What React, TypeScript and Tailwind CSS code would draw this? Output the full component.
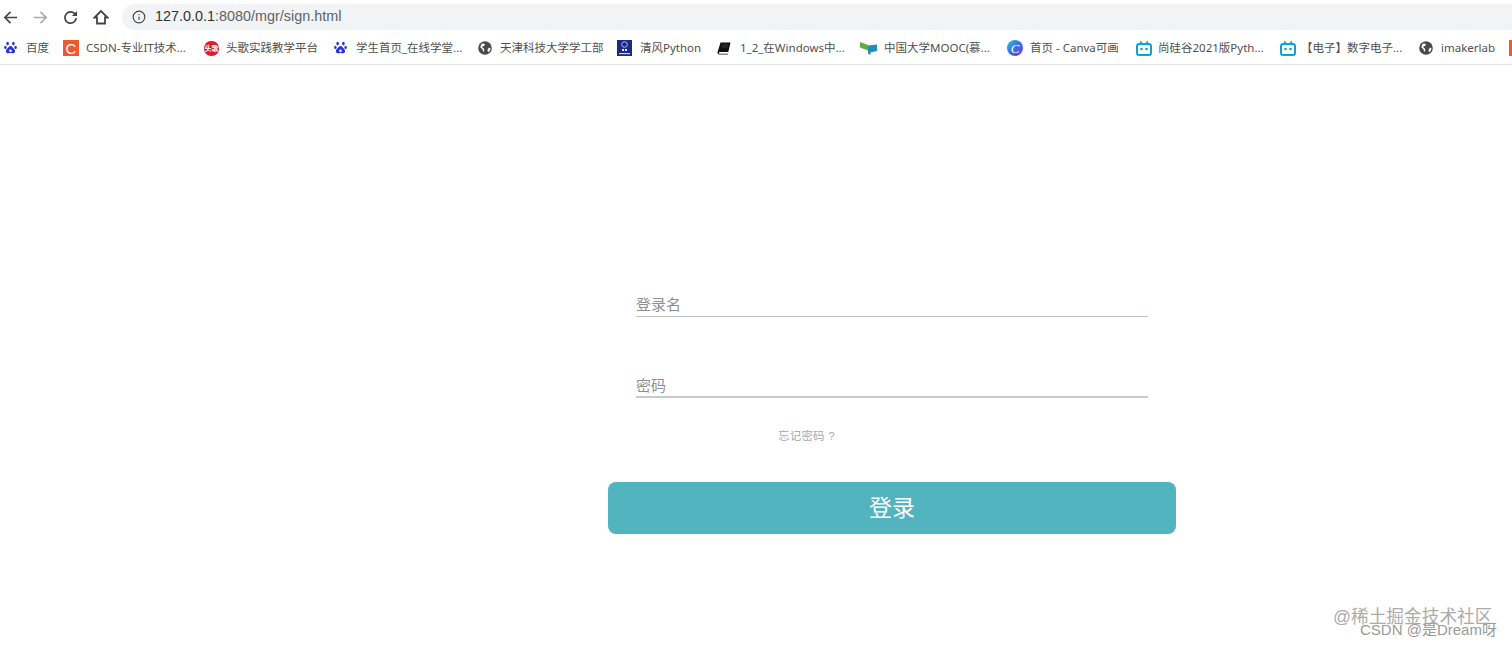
import React from 'react';
import { Info } from 'lucide-react';

const cjk = "font-['Liberation_Sans','Noto_Sans_CJK_SC',sans-serif]";
const barFont = "font-['Noto_Sans','Noto_Sans_CJK_SC',sans-serif]";

const NavIcon = ({ d, color, width = 15 }: { d: string; color: string; width?: number }) => (
  <svg width={width} height={width} viewBox="0 0 16 16" fill="none" stroke={color} strokeWidth="1.800" strokeLinejoin="miter">
    <path d={d} />
  </svg>
);

const Reload = () => (
  <svg width="15" height="15" viewBox="0 0 16 16" fill="none">
    <path d="M13.300 5.200A6 6 0 1 0 14 8.500" stroke="#444" strokeWidth="1.800" />
    <path d="M15 1v5.500h-5.500z" fill="#444" />
  </svg>
);

const Paw = () => (
  <svg width="13" height="14" viewBox="0 0 13 14" fill="#2932e1">
    <ellipse cx="3.600" cy="2.600" rx="1.300" ry="1.800" />
    <ellipse cx="9.400" cy="2.600" rx="1.300" ry="1.800" />
    <ellipse cx="1.400" cy="6.400" rx="1.200" ry="1.700" />
    <ellipse cx="11.600" cy="6.400" rx="1.200" ry="1.700" />
    <path d="M6.500 5c-1.600 0-2.200 1.600-3.200 2.600-1 1-1.600 1.800-1.300 3.200.3 1.300 1.600 1.700 2.700 1.500.7-.1 1.200-.3 1.800-.3s1.100.2 1.800.3c1.100.2 2.400-.2 2.700-1.500.3-1.400-.3-2.200-1.300-3.200-1-1-1.600-2.600-3.200-2.600z" />
    <circle cx="6.500" cy="9.800" r="1.300" fill="#fff" />
  </svg>
);

const Csdn = () => (
  <span className="flex h-4 w-4 items-center justify-center bg-[#f0582f] font-['Liberation_Sans',sans-serif] text-[15px] leading-none text-white">C</span>
);

const Touge = () => (
  <span className={`flex h-[15px] w-[15px] items-center justify-center rounded-[7px] bg-[#d9202a] text-[7px] font-bold leading-none text-white ${cjk}`}>头歌</span>
);

const Globe = () => (
  <svg width="14" height="14" viewBox="0 0 14 14">
    <circle cx="7" cy="7" r="6.800" fill="#4a4a4a" />
    <path d="M4 2.500l2.200.3.800 1-1 1.200-1.300.2-.4 1.300 1.600 1 .4 2.500-1 .8-1-2.800-2-1.500.5-2zM10.800 6.800l1.700.2-.6 2.800-1.700 1.500-.8-2z" fill="#fff" />
  </svg>
);

const PythonBadge = () => (
  <svg width="15" height="16" viewBox="0 0 15 16">
    <rect width="15" height="16" fill="#1c2a85" />
    <circle cx="7.500" cy="4.500" r="2.800" fill="none" stroke="#a8bcf0" strokeWidth="1" />
    <path d="M5 9h2v2H5zM8 9h2v2H8z" fill="#e8edfb" />
    <path d="M2 13h11v1.200H2z" fill="#c5d0f2" />
  </svg>
);

const Book = () => (
  <svg width="14" height="13" viewBox="0 0 14 13">
    <path d="M3.500 0.500h10l-2.200 9.500H3.100c-.8 0-1.200.4-1.200.9s.4.900 1.200.9h8l-.2.700H2.500C1.300 12.500.5 11.900.5 10.800c0-.3 0-.6.100-.9z" fill="#111" />
    <path d="M5 3h6M4.600 5h6" stroke="#666" strokeWidth="0.500" />
  </svg>
);

const Mooc = () => (
  <svg width="17" height="13" viewBox="0 0 17 13">
    <path d="M0 0l8 3v5.500L0 5.500z" fill="#5cae3d" />
    <path d="M8 3.500l9-1v6.500l-6.500 1.500V13L8 11.500z" fill="#1d8fb8" />
  </svg>
);

const Canva = () => (
  <span className="flex h-4 w-4 items-center justify-center rounded-full bg-gradient-to-br from-[#1fc4d9] via-[#3a6fe0] to-[#6a2fd6] font-['Liberation_Serif',serif] text-[13px] italic leading-none text-white">C</span>
);

const Bili = () => (
  <svg width="16" height="15" viewBox="0 0 16 15" fill="none">
    <path d="M4.500 0.800l2 2.200M11.500 0.800l-2 2.200" stroke="#0ea3d4" strokeWidth="1.500" strokeLinecap="round" />
    <rect x="1" y="3" width="14" height="11" rx="2" stroke="#0ea3d4" strokeWidth="2" />
    <circle cx="5.500" cy="8" r="1.300" fill="#0ea3d4" />
    <circle cx="10.500" cy="8" r="1.300" fill="#0ea3d4" />
  </svg>
);

const bookmarks = [
  { icon: <Paw />, label: '百度', box: 'w-[59px]', gap: 'gap-[9px]' },
  { icon: <Csdn />, label: 'CSDN-专业IT技术...', box: 'w-[141px]', gap: 'gap-[7px]' },
  { icon: <Touge />, label: '头歌实践教学平台', box: 'w-[130px]', gap: 'gap-[7px]' },
  { icon: <Paw />, label: '学生首页_在线学堂...', box: 'w-[144px]', gap: 'gap-[9px]' },
  { icon: <Globe />, label: '天津科技大学学工部', box: 'w-[139px]', gap: 'gap-[8px]' },
  { icon: <PythonBadge />, label: '清风Python', box: 'w-[100px]', gap: 'gap-[8px]' },
  { icon: <Book />, label: '1_2_在Windows中...', box: 'w-[143px]', gap: 'gap-[9px]' },
  { icon: <Mooc />, label: '中国大学MOOC(慕...', box: 'w-[147px]', gap: 'gap-[7px]' },
  { icon: <Canva />, label: '首页 - Canva可画', box: 'w-[129px]', gap: 'gap-[7px]' },
  { icon: <Bili />, label: '尚硅谷2021版Pyth...', box: 'w-[144px]', gap: 'gap-[6px]' },
  { icon: <Bili />, label: '【电子】数字电子...', box: 'w-[139px]', gap: 'gap-[5px]' },
  { icon: <Globe />, label: 'imakerlab', box: 'w-[90px]', gap: 'gap-[8px]' },
];

const App: React.FC = () => {
  return (
    <div className={`relative h-[646px] w-[1512px] overflow-hidden bg-white ${cjk}`}>
      {/* browser toolbar */}
      <div className="flex h-[34px] items-center pl-[3px]">
        <div className="flex w-[119px] items-center">
          <NavIcon d="M15 8H2.500M8 2 2 8l6 6" color="#444" />
          <span className="ml-[15px]">
            <NavIcon d="M1 8h12.500M8 2l6 6-6 6" color="#aaa" />
          </span>
          <span className="ml-[15px]">
            <Reload />
          </span>
          <span className="ml-[15px]">
            <NavIcon d="M4 14.500V8.500H1.500L8 2l6.500 6.500H12v6z" color="#444" width={16} />
          </span>
        </div>
        <div className="flex h-[26px] flex-1 items-center rounded-l-[13px] bg-[#f1f3f4] pl-[10px]">
          <Info size={14} strokeWidth={2} className="text-[#444]" />
          <span className="ml-[9px] text-[14.4px] text-[#5f6368]">
            <span className="text-[#333]">127.0.0.1</span>:8080/mgr/sign.html
          </span>
        </div>
      </div>

      {/* bookmarks bar */}
      <div className={`flex h-[31px] items-center border-b border-[#e2e3e5] pb-[2px] pl-[4px] ${barFont}`}>
        {bookmarks.map((b, i) => (
          <div key={i} className={`flex shrink-0 items-center ${b.box} ${b.gap}`}>
            <span className="flex h-4 shrink-0 items-center justify-center">{b.icon}</span>
            <span className="whitespace-nowrap text-[11.5px] text-[#505050]">{b.label}</span>
          </div>
        ))}
        <span className="h-[16px] w-[4px] shrink-0 bg-[#f0582f]" />
      </div>

      {/* sign in form */}
      <div className="ml-[608px] w-[568px] pt-[231px]">
        <div className="px-[28px]">
          <div className="h-[21px] border-b border-[#bfc4c4] text-[15px] leading-[18px] text-[#8f8f8f]">登录名</div>
          <div className="mt-[60px] h-[21px] border-b-2 border-[#c6caca] text-[15px] leading-[18px] text-[#8f8f8f]">密码</div>
          <div className="mt-[30px] pl-[142px] text-[11.5px] leading-[16px] tracking-[0.2px] text-[#aaa]">忘记密码 ?</div>
        </div>
        <button className="mt-[38px] flex h-[52px] w-full items-center justify-center rounded-[8px] bg-[#52b4bf] text-[23px] text-white">
          登录
        </button>
      </div>

      {/* watermarks */}
      <div className="absolute left-[1333px] top-[605px] whitespace-nowrap text-[17.7px] leading-[24px] text-[#ababab]">@稀土掘金技术社区</div>
      <div className="absolute left-[1360px] top-[620px] whitespace-nowrap text-[15px] leading-[20px] text-[#9a9a9a]">CSDN @是Dream呀</div>
    </div>
  );
};

export default App;
